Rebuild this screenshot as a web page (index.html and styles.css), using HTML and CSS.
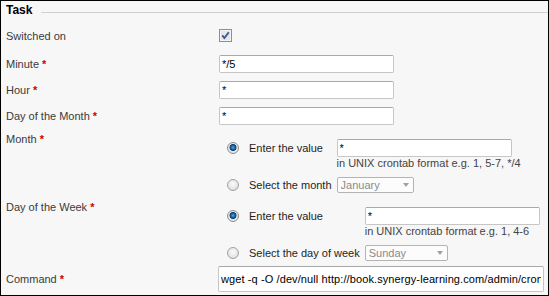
FILE: index.html
```html
<!DOCTYPE html>
<html lang="en">
<head>
    <meta charset="UTF-8">
    <title>Task</title>
    <link rel="stylesheet" href="styles.css">
</head>
<body>

<!-- Scheduled task form -->
<div class="panel">
    <div class="legend">
        <span class="legend-title">Task</span>
        <span class="legend-line"></span>
    </div>

    <div class="row row-check">
        <label class="label">Switched on</label>
        <span class="check">
            <svg width="13" height="13" viewBox="0 0 13 13">
                <rect x="0.5" y="0.5" width="12" height="12" fill="#e6e6e6" stroke="#8e8e8e"/>
                <rect x="1.5" y="1.5" width="10" height="10" fill="none" stroke="#f6f6f6"/>
                <path d="M3.2 6.4 L5.4 9 L9.8 3.2" fill="none" stroke="#3a5796" stroke-width="1.8"/>
            </svg>
        </span>
    </div>

    <div class="row">
        <label class="label">Minute <span class="req">*</span></label>
        <input class="text" type="text" value="*/5">
    </div>

    <div class="row">
        <label class="label">Hour <span class="req">*</span></label>
        <input class="text" type="text" value="*">
    </div>

    <div class="row">
        <label class="label">Day of the Month <span class="req">*</span></label>
        <input class="text" type="text" value="*">
    </div>

    <div class="group">
        <div class="label">Month <span class="req">*</span></div>
        <div class="options">
            <input class="radio" type="radio" name="month" checked>
            <label class="opt-label">Enter the value</label>
            <input class="text" type="text" value="*">

            <span></span>
            <span></span>
            <div class="help">in UNIX crontab format e.g. 1, 5-7, */4</div>

            <input class="radio" type="radio" name="month">
            <label class="opt-label">Select the month</label>
            <span class="select">
                <select class="select-month"><option>January</option></select>
            </span>
        </div>
    </div>

    <div class="group">
        <div class="label">Day of the Week <span class="req">*</span></div>
        <div class="options">
            <input class="radio" type="radio" name="dow" checked>
            <label class="opt-label">Enter the value</label>
            <input class="text" type="text" value="*">

            <span></span>
            <span></span>
            <div class="help">in UNIX crontab format e.g. 1, 4-6</div>

            <input class="radio" type="radio" name="dow">
            <label class="opt-label">Select the day of week</label>
            <span class="select">
                <select class="select-day"><option>Sunday</option></select>
            </span>
        </div>
    </div>

    <div class="row row-command">
        <label class="label">Command <span class="req">*</span></label>
        <input class="text command" type="text" value="wget -q -O /dev/null http://book.synergy-learning.com/admin/cron.php">
    </div>
</div>

</body>
</html>
```

FILE: styles.css
```css
/* Global Styles */
* {
    margin: 0;
    padding: 0;
    box-sizing: border-box;
}

body {
    font-family: 'Liberation Sans', Arial, sans-serif;
    font-size: 11px;
    color: #3a3a3a;
    background-color: #fff;
}

/* Panel */
.panel {
    width: 549px;
    height: 296px;
    border: 1px solid #000;
    background-color: #f7f7f7;
    padding-left: 5px;
    overflow: hidden;
}

.legend {
    display: flex;
    height: 22px;
    padding-top: 2px;
}

.legend-title {
    font-size: 12px;
    font-weight: bold;
    line-height: 14px;
    color: #000;
}

.legend-line {
    flex: 1;
    height: 0;
    margin: 9px 0 0 9px;
    border-top: 1px solid #d0d0d0;
}

/* Rows */
.row {
    display: grid;
    grid-template-columns: 213px auto;
    align-items: center;
    justify-content: start;
    height: 26px;
}

.row-check {
    height: 28px;
    align-items: start;
    padding-top: 6px;
}

.row-command {
    grid-template-columns: 212px auto;
    height: 32px;
    padding-top: 3px;
}

.label {
    line-height: 14px;
}

.req {
    color: #cc0000;
    font-weight: bold;
}

.check {
    display: block;
    height: 13px;
}

.check svg {
    display: block;
}

/* Inputs */
.text {
    width: 175px;
    height: 18px;
    padding: 0 2px;
    border: 1px solid #c6c6c6;
    border-top-color: #a8a8a8;
    border-radius: 2px;
    background-color: #fff;
    font-family: 'Liberation Sans', Arial, sans-serif;
    font-size: 11px;
    color: #000;
    outline: none;
}

.command {
    width: 326px;
    height: 26px;
    padding: 0 2px;
    letter-spacing: 0.1px;
}

/* Radio groups */
.group {
    display: grid;
    grid-template-columns: 213px auto;
    align-items: start;
    justify-content: start;
    padding-top: 3px;
}

.group + .group {
    margin-top: 4px;
}

.options {
    display: grid;
    grid-template-columns: auto auto auto;
    align-items: center;
    justify-items: start;
    justify-content: start;
    margin-top: 7px;
}

.radio {
    appearance: none;
    width: 12px;
    height: 12px;
    margin: 0 10px 0 8px;
    border: 1px solid #a2a2a2;
    border-radius: 50%;
    background: radial-gradient(circle at 50% 40%, #fbfbfb 0, #e2e2e2 70%, #d2d2d2 100%);
}

.radio:checked {
    border-color: #8f8f8f;
    background: radial-gradient(circle at 50% 45%, #5aa7e0 0, #1f6fb0 1.6px, #0c3f74 3.2px, #e8e8e8 3.8px, #dcdcdc 100%);
}

.opt-label {
    line-height: 14px;
    padding-right: 5px;
    color: #1e1e1e;
    white-space: nowrap;
}

.help {
    line-height: 13px;
    padding-bottom: 7px;
    color: #444;
    white-space: nowrap;
}

/* Selects */
.select {
    position: relative;
    display: inline-block;
    height: 16px;
}

.select select {
    appearance: none;
    display: block;
    height: 16px;
    padding: 0 3px;
    border: 1px solid #b4b4b4;
    border-radius: 2px;
    background-color: #fcfcfc;
    font-family: 'Liberation Sans', Arial, sans-serif;
    font-size: 11px;
    color: #8a8a8a;
    outline: none;
}

.select::after {
    content: '';
    position: absolute;
    right: 5px;
    top: 6px;
    border-left: 3.5px solid transparent;
    border-right: 3.5px solid transparent;
    border-top: 4px solid #a0a0a0;
}

.select-month {
    width: 77px;
}

.select-day {
    width: 83px;
}
```
